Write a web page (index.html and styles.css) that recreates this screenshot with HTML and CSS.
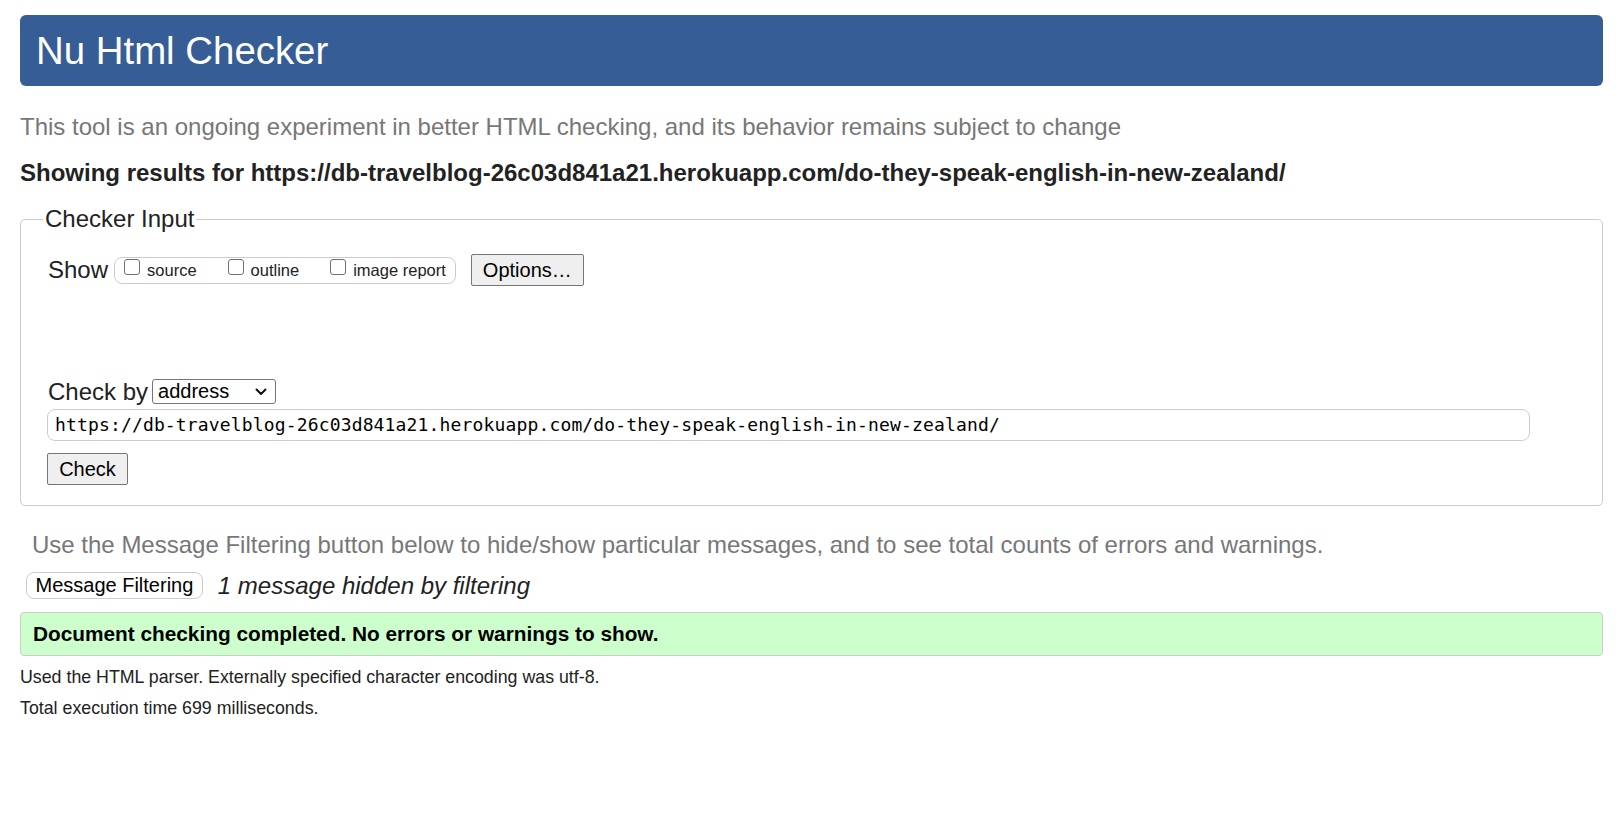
FILE: index.html
```
<!DOCTYPE html>
<html lang="en">
<head>
<meta charset="utf-8">
<title>Nu Html Checker</title>
<link rel="stylesheet" href="styles.css">
</head>
<body>
<h1 class="title">Nu Html Checker</h1>
<p class="lede">This tool is an ongoing experiment in better HTML checking, and its behavior remains subject to change</p>
<p class="results-for">Showing results for https://db-travelblog-26c03d841a21.herokuapp.com/do-they-speak-english-in-new-zealand/</p>
<fieldset class="checker">
  <legend class="checker-legend">Checker Input</legend>
  <div class="show-row">
    <span class="show-label">Show</span>
    <div class="show-group">
      <label class="opt"><input class="cb" type="checkbox"><span class="opt-text">source</span></label>
      <label class="opt"><input class="cb" type="checkbox"><span class="opt-text">outline</span></label>
      <label class="opt"><input class="cb" type="checkbox"><span class="opt-text">image report</span></label>
    </div>
    <button class="btn options-btn" type="button">Options…</button>
  </div>
  <div class="checkby-row">
    <span class="checkby-label">Check by</span>
    <div class="fake-select">
      <span>address</span>
      <svg class="chev" width="12" height="8" viewBox="0 0 12 8"><path d="M1.5 1.5 L6 6 L10.5 1.5" fill="none" stroke="#111" stroke-width="2" stroke-linecap="round" stroke-linejoin="round"/></svg>
    </div>
  </div>
  <div class="url-box">https://db-travelblog-26c03d841a21.herokuapp.com/do-they-speak-english-in-new-zealand/</div>
  <button class="btn check-btn" type="button">Check</button>
</fieldset>
<p class="hint">Use the Message Filtering button below to hide/show particular messages, and to see total counts of errors and warnings.</p>
<div class="filter-row">
  <button class="filter-btn" type="button">Message Filtering</button>
  <span class="filter-note">1 message hidden by filtering</span>
</div>
<div class="success">Document checking completed. No errors or warnings to show.</div>
<p class="meta">Used the HTML parser. Externally specified character encoding was utf-8.</p>
<p class="meta meta-2">Total execution time 699 milliseconds.</p>
</body>
</html>
```

FILE: styles.css
```
html, body {
  background: #ffffff;
}
body {
  margin: 0;
  padding: 15px 17px 0 20px;
  font-family: "Liberation Sans", Arial, sans-serif;
  font-size: 24px;
  color: #222222;
}
.title {
  margin: 0;
  height: 71px;
  line-height: 71px;
  padding: 0 16px;
  background: #365d95;
  color: #ffffff;
  font-size: 38.4px;
  font-weight: normal;
  border-radius: 6px;
}
.lede {
  margin: 27px 0 0 0;
  line-height: 28.8px;
  color: #777777;
}
.results-for {
  margin: 17.5px 0 0 0;
  line-height: 28.8px;
  font-weight: bold;
  color: #222222;
}
.checker {
  margin: 17px 0 0 0;
  padding: 21px 0 20px 26px;
  border: 1px solid #cccccc;
  border-radius: 5px;
  min-width: 0;
}
.checker-legend {
  margin-left: -4px;
  padding: 0 2px;
  line-height: 28px;
  font-size: 24px;
  color: #222222;
}
.show-row {
  display: flex;
  align-items: center;
  height: 32px;
  margin-left: 1px;
}
.show-label {
  line-height: 28px;
}
.show-group {
  display: flex;
  align-items: flex-start;
  height: 25px;
  margin-left: 6px;
  padding: 0 9px 0 9px;
  border: 1px solid #cccccc;
  border-radius: 8px;
}
.opt {
  display: flex;
  align-items: flex-start;
  margin-right: 31px;
}
.opt:last-child {
  margin-right: 0;
}
.cb {
  appearance: none;
  -webkit-appearance: none;
  width: 16px;
  height: 16px;
  margin: 1px 0 0 0;
  border: 1px solid #707070;
  border-radius: 3px;
  background: #ffffff;
}
.opt-text {
  margin-left: 7px;
  padding-top: 3px;
  font-size: 16.5px;
  line-height: 19px;
  color: #222222;
}
.btn {
  height: 32px;
  padding: 0 11px;
  font-family: "Liberation Sans", Arial, sans-serif;
  font-size: 20px;
  color: #000000;
  background: #efefef;
  border: 1px solid #767676;
  border-radius: 2px;
}
.options-btn {
  margin-left: 15px;
}
.checkby-row {
  display: flex;
  align-items: center;
  margin-top: 93px;
  height: 25px;
  padding-left: 1px;
}
.checkby-label {
  line-height: 28px;
}
.fake-select {
  display: flex;
  align-items: center;
  justify-content: space-between;
  box-sizing: border-box;
  width: 124px;
  height: 25px;
  margin-left: 4px;
  padding: 0 8px 0 5px;
  border: 1px solid #767676;
  border-radius: 3px;
  font-size: 20px;
  color: #000000;
  background: #ffffff;
}
.chev {
  display: block;
}
.url-box {
  box-sizing: border-box;
  width: 1483px;
  height: 32px;
  margin-top: 5px;
  padding: 0 7px;
  border: 1px solid #cccccc;
  border-radius: 8px;
  font-family: "DejaVu Sans Mono", "Liberation Mono", monospace;
  font-size: 18px;
  letter-spacing: 0.15px;
  line-height: 30px;
  color: #000000;
  white-space: nowrap;
}
.check-btn {
  display: block;
  width: 81px;
  margin-top: 12px;
}
.hint {
  margin: 25px 0 0 12px;
  line-height: 28.8px;
  color: #777777;
}
.filter-row {
  display: flex;
  align-items: center;
  margin-top: 12px;
  margin-left: 6px;
}
.filter-btn {
  height: 27px;
  padding: 0 8.5px;
  font-family: "Liberation Sans", Arial, sans-serif;
  font-size: 20px;
  color: #000000;
  background: #ffffff;
  border: 1px solid #cccccc;
  border-radius: 8px;
}
.filter-note {
  margin-left: 15px;
  font-style: italic;
  line-height: 28px;
  color: #222222;
}
.success {
  display: flex;
  align-items: center;
  box-sizing: border-box;
  height: 44px;
  margin-top: 12px;
  padding: 0 12px;
  background: #ccffcc;
  border: 1px solid #cccccc;
  border-radius: 4px;
  font-size: 20.8px;
  font-weight: bold;
  color: #000000;
}
.meta {
  margin: 11px 0 0 0;
  font-size: 17.8px;
  line-height: 21.6px;
  color: #222222;
}
.meta-2 {
  margin-top: 9.5px;
}
```
